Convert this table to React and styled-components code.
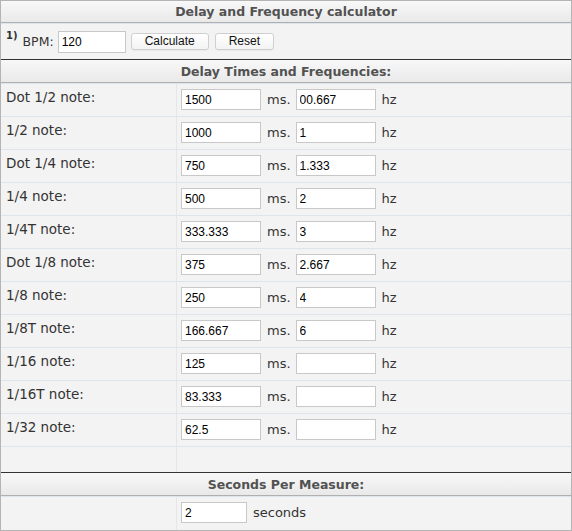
import React from 'react';
import styled, { createGlobalStyle } from 'styled-components';

const GlobalStyle = createGlobalStyle`
  html, body { margin: 0; padding: 0; background: #ffffff; }
  body { font-family: "DejaVu Sans", sans-serif; }
`;

const Panel = styled.div`
  width: 572px;
  height: 531px;
  box-sizing: border-box;
  border: 1px solid #b4b4b4;
  background: #f3f3f3;
  display: flex;
  flex-direction: column;
`;

const Title = styled.div`
  height: 21px;
  border-bottom: 1px solid #b0b0b0;
  background: linear-gradient(#f8f8f8, #e9e9e9);
  display: flex;
  align-items: center;
  justify-content: center;
  font: bold 12.5px "DejaVu Sans", sans-serif;
  color: #525252;
`;

const SectionHeader = styled(Title)`
  height: 22px;
  border-top: 1px solid #333333;
`;

const BpmRow = styled.div`
  height: 35px;
  border-top: 1px solid #dde4ec;
  display: flex;
  align-items: center;
  padding-left: 5px;
  color: #333;
  font-size: 12.5px;
`;

const Sup = styled.span`
  align-self: flex-start;
  margin-top: 6px;
  font: bold 10px "DejaVu Sans", sans-serif;
  line-height: 12px;
  margin-right: 5px;
`;

const Field = styled.input`
  box-sizing: border-box;
  width: ${(p) => p.$w || 80}px;
  height: ${(p) => p.$h || 21}px;
  border: 1px solid #c8c8c8;
  background: #ffffff;
  padding: 0 3px;
  margin: 0;
  font: 12px "Liberation Sans", Arial, sans-serif;
  color: #000;
  outline: none;
  border-radius: 0;
`;

const BpmField = styled(Field)`
  margin-left: 4px;
`;

const Button = styled.button`
  height: 17px;
  margin-left: ${(p) => p.$ml}px;
  padding: 0 13px;
  border: 1px solid #cfcfcf;
  border-radius: 3px;
  background: linear-gradient(#ffffff, #f3f3f3);
  box-shadow: 0 1px 0 rgba(0, 0, 0, 0.04);
  font: 12px "Liberation Sans", Arial, sans-serif;
  color: #111;
  line-height: 15px;
`;

const Row = styled.div`
  display: grid;
  grid-template-columns: 176px 1fr;
  height: ${(p) => p.$h || 32}px;
  border-top: 1px solid #dde4ec;
`;

const Label = styled.div`
  border-right: 1px solid #e3e7eb;
  padding: 5px 5px;
  line-height: 16px;
  font-size: 13.5px;
  color: #333;
`;

const Value = styled.div`
  display: flex;
  align-items: flex-start;
  padding: 5px 4px 0;
`;

const Unit = styled.span`
  font-size: 13px;
  color: #333;
  line-height: 21px;
  margin: 0 5px 0 6px;
`;

const rows = [
  ['Dot 1/2 note:', '1500', '00.667'],
  ['1/2 note:', '1000', '1'],
  ['Dot 1/4 note:', '750', '1.333'],
  ['1/4 note:', '500', '2'],
  ['1/4T note:', '333.333', '3'],
  ['Dot 1/8 note:', '375', '2.667'],
  ['1/8 note:', '250', '4'],
  ['1/8T note:', '166.667', '6'],
  ['1/16 note:', '125', ''],
  ['1/16T note:', '83.333', ''],
  ['1/32 note:', '62.5', ''],
];

export default function App() {
  return (
    <>
      <GlobalStyle />
      <Panel>
        <Title>Delay and Frequency calculator</Title>
        <BpmRow>
          <Sup>1)</Sup>
          <span>BPM:</span>
          <BpmField $w={68} $h={22} defaultValue="120" />
          <Button $ml={5}>Calculate</Button>
          <Button $ml={6}>Reset</Button>
        </BpmRow>
        <SectionHeader>Delay Times and Frequencies:</SectionHeader>
        {rows.map(([label, ms, hz]) => (
          <Row key={label}>
            <Label>{label}</Label>
            <Value>
              <Field defaultValue={ms} />
              <Unit>ms.</Unit>
              <Field defaultValue={hz} />
              <Unit>hz</Unit>
            </Value>
          </Row>
        ))}
        <Row $h={25}>
          <Label />
          <Value />
        </Row>
        <SectionHeader>Seconds Per Measure:</SectionHeader>
        <Row $h={33}>
          <Label />
          <Value>
            <Field $w={66} defaultValue="2" />
            <Unit>seconds</Unit>
          </Value>
        </Row>
      </Panel>
    </>
  );
}
